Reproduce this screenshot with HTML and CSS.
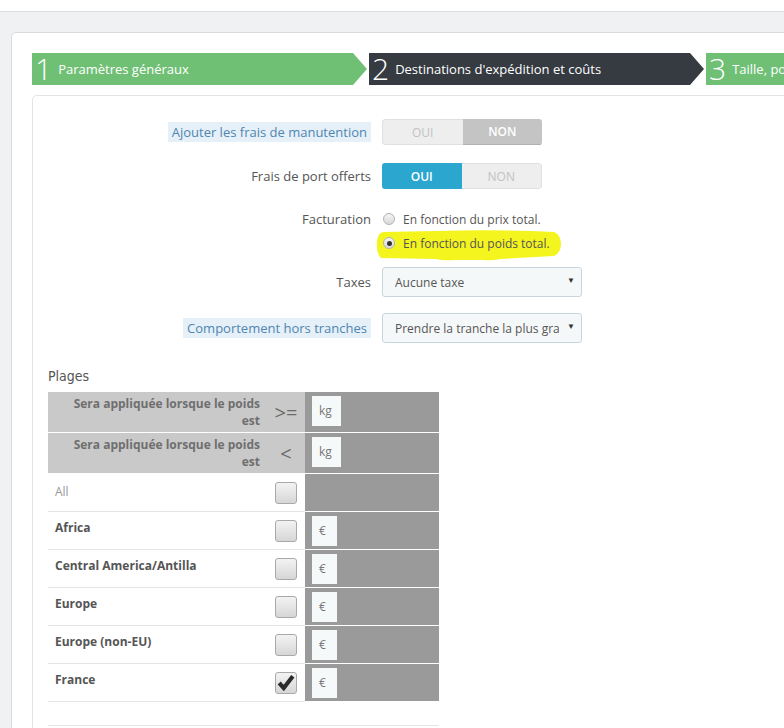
FILE: index.html
```html
<!DOCTYPE html>
<html lang="fr">
<head>
    <meta charset="UTF-8">
    <meta name="viewport" content="width=device-width, initial-scale=1.0">
    <title>Transporteur - Destinations d'expédition et coûts</title>
    <link rel="stylesheet" href="styles.css">
</head>
<body>
    <div class="topbar"></div>

    <div class="page">
        <div class="panel">
            <!-- étapes de l'assistant -->
            <div class="steps">
                <div class="step done"><span class="num">1</span>Paramètres généraux</div>
                <div class="step current"><span class="num">2</span>Destinations d'expédition et coûts</div>
                <div class="step done"><span class="num">3</span>Taille, poids et groupes</div>
            </div>

            <div class="form-panel">
                <div class="form-row">
                    <div class="form-label"><span class="hint">Ajouter les frais de manutention</span></div>
                    <div class="switch">
                        <span class="off">OUI</span>
                        <span class="on-gray">NON</span>
                    </div>
                </div>

                <div class="form-row">
                    <div class="form-label">Frais de port offerts</div>
                    <div class="switch">
                        <span class="on-blue">OUI</span>
                        <span class="off">NON</span>
                    </div>
                </div>

                <div class="form-row top billing">
                    <div class="form-label line">Facturation</div>
                    <div class="radios">
                        <label class="radio"><i class="dot"></i><span>En fonction du prix total.</span></label>
                        <label class="radio marked">
                            <svg class="mark" viewBox="0 0 186 32" width="186" height="32">
                                <path d="M7 3 Q2 4 1 12 Q0 24 5 29 L60 30 Q67 32 80 31 L108 31 Q116 32 124 30 L178 27 Q185 24 185 14 Q184 5 178 3 Q120 0 60 2 Z" fill="#f4f41e"/>
                            </svg>
                            <i class="dot checked"></i><span>En fonction du poids total.</span>
                        </label>
                    </div>
                </div>

                <div class="form-row taxes">
                    <div class="form-label">Taxes</div>
                    <div class="select"><span class="val">Aucune taxe</span><span class="caret">▼</span></div>
                </div>

                <div class="form-row">
                    <div class="form-label"><span class="hint">Comportement hors tranches</span></div>
                    <div class="select"><span class="val">Prendre la tranche la plus grande</span><span class="caret">▼</span></div>
                </div>

                <div class="plages">Plages</div>

                <!-- tranches de poids -->
                <div class="ranges">
                    <div class="row head">
                        <div class="name">Sera appliquée lorsque le poids<br>est</div>
                        <div class="sym">&gt;=</div>
                        <div class="val"><span class="box unit">kg</span></div>
                    </div>
                    <div class="row head">
                        <div class="name">Sera appliquée lorsque le poids<br>est</div>
                        <div class="sym">&lt;</div>
                        <div class="val"><span class="box unit">kg</span></div>
                    </div>
                    <div class="row zone all">
                        <div class="name">All</div>
                        <div class="sym"><span class="check"></span></div>
                        <div class="val"></div>
                    </div>
                    <div class="row zone">
                        <div class="name">Africa</div>
                        <div class="sym"><span class="check"></span></div>
                        <div class="val"><span class="box">€</span></div>
                    </div>
                    <div class="row zone">
                        <div class="name">Central America/Antilla</div>
                        <div class="sym"><span class="check"></span></div>
                        <div class="val"><span class="box">€</span></div>
                    </div>
                    <div class="row zone">
                        <div class="name">Europe</div>
                        <div class="sym"><span class="check"></span></div>
                        <div class="val"><span class="box">€</span></div>
                    </div>
                    <div class="row zone">
                        <div class="name">Europe (non-EU)</div>
                        <div class="sym"><span class="check"></span></div>
                        <div class="val"><span class="box">€</span></div>
                    </div>
                    <div class="row zone">
                        <div class="name">France</div>
                        <div class="sym">
                            <span class="check">
                                <svg viewBox="0 0 22 22" width="20" height="20">
                                    <path d="M3.5 11 L8.5 16.5 L18.5 3.5" fill="none" stroke="#2b2b2b" stroke-width="4.5" stroke-linejoin="miter"/>
                                </svg>
                            </span>
                        </div>
                        <div class="val"><span class="box">€</span></div>
                    </div>
                    <div class="row foot">
                        <div class="name"></div>
                        <div class="sym"></div>
                        <div class="val"></div>
                    </div>
                </div>
            </div>
        </div>
    </div>
</body>
</html>
```

FILE: styles.css
```css
/* base */
body {
    margin: 0;
    height: 728px;
    overflow: hidden;
    background: #eff1f2;
    font-family: 'Open Sans', 'Liberation Sans', sans-serif;
    color: #555;
}

.topbar {
    height: 11px;
    background: #fff;
    border-bottom: 1px solid #dcdee0;
}

.page {
    padding-top: 20px;
}

/* panneau principal */
.panel {
    margin-left: 11px;
    width: 1100px;
    padding: 20px 0 0 20px;
    background: #fff;
    border: 1px solid #d9dcde;
    border-radius: 5px;
    min-height: 800px;
}

/* étapes */
.steps {
    display: flex;
    gap: 2px;
    height: 32px;
}

.step {
    flex: 0 0 335px;
    height: 32px;
    display: flex;
    align-items: center;
    padding-left: 3px;
    padding-bottom: 1px;
    box-sizing: border-box;
    color: #fff;
    font-size: 13px;
    clip-path: polygon(0 0, calc(100% - 14px) 0, 100% 50%, calc(100% - 14px) 100%, 0 100%);
}

.step.done {
    background: #6fc075;
}

.step.current {
    background: #363a41;
}

.step .num {
    font-size: 30px;
    font-weight: 300;
    line-height: 32px;
    margin-right: 6px;
}

/* formulaire */
.form-panel {
    margin-top: 10px;
    padding: 23px 0 0 0;
    border: 1px solid #e1e3e5;
    border-radius: 5px;
    min-height: 700px;
}

.form-row {
    display: flex;
    align-items: center;
    margin-bottom: 18px;
}

.form-row.top {
    align-items: flex-start;
}

.form-row.billing {
    margin-bottom: 12px;
}

.form-row.taxes {
    margin-bottom: 16px;
}

.form-label {
    width: 338px;
    margin-right: 11px;
    display: flex;
    justify-content: flex-end;
    font-size: 13px;
    color: #555;
}

.form-label.line {
    line-height: 24px;
}

.hint {
    padding: 2px 4px;
    line-height: 16px;
    background: #e6f0f8;
    color: #4f86b1;
}

/* interrupteur oui/non */
.switch {
    display: flex;
    width: 160px;
    height: 26px;
    border-radius: 3px;
    overflow: hidden;
    font-size: 12px;
}

.switch span {
    flex: 1;
    display: flex;
    align-items: center;
    justify-content: center;
}

.switch .off {
    background: #eeeeee;
    color: #c2c2c2;
    border: 1px solid #e0e0e0;
}

.switch .off:first-child {
    border-right: none;
    border-radius: 3px 0 0 3px;
}

.switch .off:last-child {
    border-left: none;
    border-radius: 0 3px 3px 0;
}

.switch .on-gray {
    background: #c4c4c4;
    color: #fff;
    font-weight: 600;
    border-bottom: 1px solid #b0b0b0;
}

.switch .on-blue {
    background: #2ba7cf;
    color: #fff;
    font-weight: 600;
}

/* boutons radio */
.radio {
    position: relative;
    display: flex;
    align-items: center;
    height: 24px;
    font-size: 12px;
    color: #555;
}

.radio span,
.radio .dot {
    position: relative;
    z-index: 1;
}

.radio .mark {
    position: absolute;
    left: -6px;
    top: -2px;
    z-index: 0;
}

.dot {
    width: 12px;
    height: 12px;
    margin: 0 8px 0 1px;
    box-sizing: border-box;
    border: 1px solid #b3b3b3;
    border-radius: 50%;
    background: linear-gradient(#f4f4f4, #d9d9d9);
    display: flex;
    align-items: center;
    justify-content: center;
}

.dot.checked::after {
    content: '';
    width: 5px;
    height: 5px;
    border-radius: 50%;
    background: #333;
}

/* listes déroulantes */
.select {
    width: 200px;
    height: 30px;
    box-sizing: border-box;
    display: flex;
    align-items: center;
    padding-left: 12px;
    border: 1px solid #c7d6db;
    border-radius: 3px;
    background: #f5f8f9;
    font-size: 12px;
    color: #555;
}

.select .val {
    flex: 1;
    overflow: hidden;
    white-space: nowrap;
    margin-right: 2px;
}

.select .caret {
    width: 20px;
    text-align: center;
    font-size: 8px;
    color: #333;
    padding-bottom: 5px;
}

/* plages */
.plages {
    margin: 23px 0 6px 15px;
    font-family: 'DejaVu Sans Condensed', 'DejaVu Sans', sans-serif;
    font-size: 14px;
    line-height: 20px;
    color: #555;
}

.ranges {
    margin-left: 15px;
    width: 391px;
    font-size: 12px;
}

.row {
    display: grid;
    grid-template-columns: 219px 38px 134px;
}

.row > div {
    box-sizing: border-box;
}

.row.head {
    height: 41px;
}

.row.head .name,
.row.head .sym {
    background: #c9c9c9;
    border-bottom: 1px solid #fff;
}

.row.head .name {
    text-align: right;
    padding: 3px 7px 0 0;
    line-height: 17px;
    font-weight: bold;
    color: #6f6f6f;
}

.row.head .sym {
    display: flex;
    align-items: center;
    justify-content: center;
    font-size: 20px;
    color: #6a6a6a;
}

.row .val {
    background: #9a9a9a;
    border-bottom: 1px solid #fff;
    padding: 4px 0 0 7px;
}

.row.zone {
    height: 38px;
}

.row.zone .name,
.row.zone .sym {
    border-bottom: 1px solid #e4e4e4;
}

.row.zone .name {
    padding: 8px 0 0 7px;
    line-height: 16px;
    font-weight: bold;
    color: #555;
}

.row.zone.all .name {
    padding-top: 10px;
    font-weight: normal;
    color: #999;
}

.row.zone .sym {
    display: flex;
    align-items: center;
    justify-content: center;
}

.row.foot {
    height: 24px;
}

.row.foot > div {
    background: #fff;
    border-bottom: 1px solid #e4e4e4;
}

/* champs */
.box {
    display: inline-block;
    width: 25px;
    height: 30px;
    box-sizing: border-box;
    padding-left: 7px;
    line-height: 30px;
    background: #f6f9fa;
    color: #777;
}

.box.unit {
    width: 29px;
}

/* cases à cocher */
.check {
    width: 22px;
    height: 22px;
    box-sizing: border-box;
    border: 1px solid #a9a9a9;
    border-radius: 3px;
    background: linear-gradient(#f3f3f3, #d6d6d6);
    display: flex;
    align-items: center;
    justify-content: center;
}
```
